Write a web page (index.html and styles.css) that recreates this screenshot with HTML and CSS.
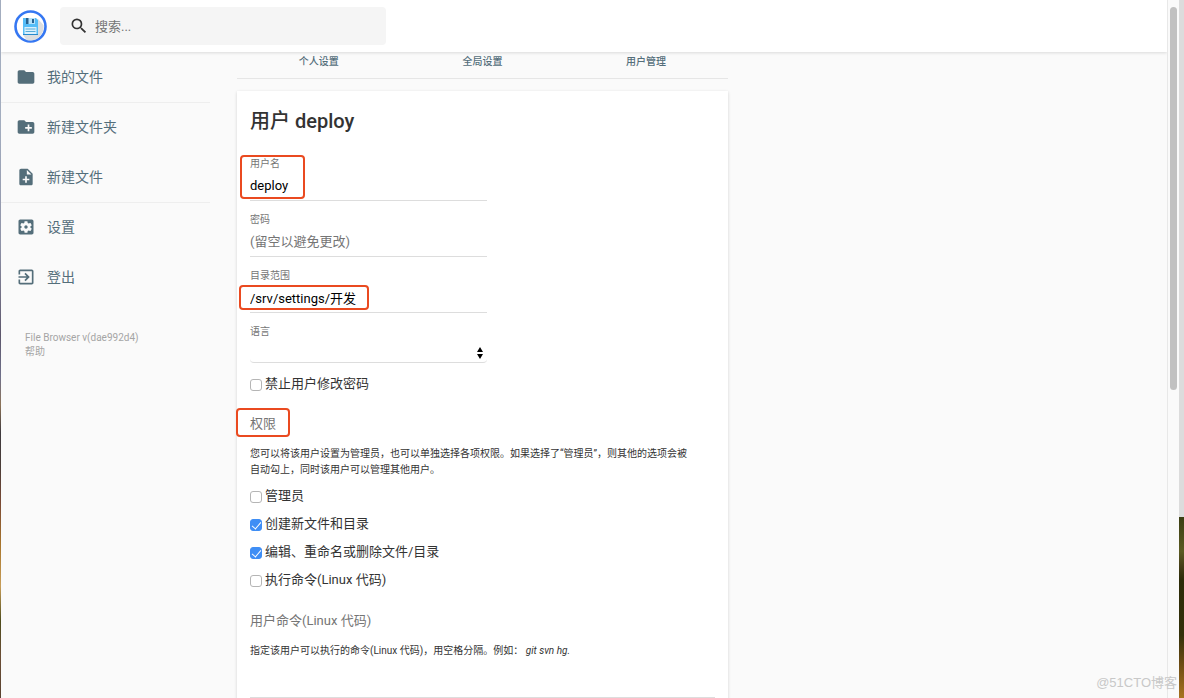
FILE: index.html
```html
<!DOCTYPE html>
<html lang="zh-CN">
<head>
<meta charset="utf-8">
<title>File Browser</title>
<link rel="stylesheet" href="styles.css">
</head>
<body>
<div class="edge-left"></div>
<div class="app">
  <header class="topbar">
    <svg class="logo" viewBox="0 0 33 33" role="img" aria-label="File Browser">
      <circle cx="16.500" cy="16.500" r="15" fill="#fff" stroke="#3577f2" stroke-width="2.600"/>
      <path d="M24 9l5.500 6a13.500 13.500 0 0 1-17 15L9 25z" fill="#dcdee0"/>
      <path d="M9 8h13l2 2v15H9z" fill="#55bdf8"/>
      <path d="M12 8h9v6h-9z" fill="#b5e2fb"/>
      <path d="M12 8h2.500v6H12zM18 9h2v4h-2z" fill="#28618f"/>
      <path d="M10.500 17h12v7h-12z" fill="#d9f0fd"/>
      <path d="M11.500 19h10M11.500 21.500h10" stroke="#58acd8" stroke-width="1"/>
      <path d="M9 24.500h15" stroke="#2889cc" stroke-width="1"/>
    </svg>
    <label class="search">
      <svg class="icon" viewBox="0 0 24 24" aria-hidden="true"><path d="M15.500 14h-.79l-.28-.27A6.471 6.471 0 0 0 16 9.500 6.500 6.500 0 1 0 9.500 16c1.610 0 3.090-.59 4.230-1.570l.27.28v.79l5 4.990L20.490 19l-4.990-5zm-6 0C7.010 14 5 11.990 5 9.500S7.010 5 9.500 5 14 7.010 14 9.500 11.990 14 9.500 14z"/></svg>
      <input type="text" placeholder="搜索..." aria-label="搜索">
    </label>
  </header>
  <div class="body">
    <nav class="sidebar">
      <div class="group">
        <button class="action"><svg class="icon" viewBox="0 0 24 24" aria-hidden="true"><path d="M10 4H4c-1.100 0-1.990.9-1.990 2L2 18c0 1.100.9 2 2 2h16c1.100 0 2-.9 2-2V8c0-1.100-.9-2-2-2h-8l-2-2z"/></svg><span>我的文件</span></button>
      </div>
      <div class="group">
        <button class="action"><svg class="icon" viewBox="0 0 24 24" aria-hidden="true"><path d="M20 6h-8l-2-2H4c-1.110 0-1.990.89-1.990 2L2 18c0 1.110.89 2 2 2h16c1.110 0 2-.89 2-2V8c0-1.110-.89-2-2-2zm-1 8h-3v3h-2v-3h-3v-2h3V9h2v3h3v2z"/></svg><span>新建文件夹</span></button>
        <button class="action"><svg class="icon" viewBox="0 0 24 24" aria-hidden="true"><path d="M14 2H6c-1.100 0-1.990.9-1.990 2L4 20c0 1.100.89 2 1.990 2H18c1.100 0 2-.9 2-2V8l-6-6zm2 14h-3v3h-2v-3H8v-2h3v-3h2v3h3v2zm-3-7V3.500L18.500 9H13z"/></svg><span>新建文件</span></button>
      </div>
      <div class="group">
        <button class="action"><svg class="icon" viewBox="0 0 24 24" aria-hidden="true"><path d="M12 10c-1.100 0-2 .9-2 2s.9 2 2 2 2-.9 2-2-.9-2-2-2zm7-7H5c-1.110 0-2 .9-2 2v14c0 1.100.89 2 2 2h14c1.110 0 2-.9 2-2V5c0-1.100-.89-2-2-2zm-1.750 9c0 .23-.02.46-.05.68l1.480 1.160c.13.110.17.3.08.45l-1.400 2.420c-.09.15-.27.21-.43.15l-1.740-.7c-.36.28-.76.51-1.180.69l-.26 1.850c-.03.17-.18.3-.35.3h-2.800c-.17 0-.32-.13-.35-.29l-.26-1.850c-.43-.18-.82-.41-1.180-.69l-1.740.7c-.16.06-.34 0-.43-.15l-1.400-2.420c-.09-.15-.05-.34.08-.45l1.480-1.160c-.03-.23-.05-.46-.05-.69s.02-.46.05-.68l-1.480-1.160c-.13-.11-.17-.3-.08-.45l1.400-2.420c.09-.15.27-.21.43-.15l1.740.7c.36-.28.76-.51 1.180-.69l.26-1.850c.03-.17.18-.3.35-.3h2.800c.17 0 .32.13.35.29l.26 1.850c.43.18.82.41 1.180.69l1.740-.7c.16-.06.34 0 .43.15l1.400 2.420c.09.15.05.34-.08.45l-1.480 1.160c.03.23.05.46.05.69z"/></svg><span>设置</span></button>
        <button class="action"><svg class="icon" viewBox="0 0 24 24" aria-hidden="true"><path d="M10.090 15.590L11.500 17l5-5-5-5-1.410 1.410L12.670 11H3v2h9.670l-2.580 2.590zM19 3H5c-1.110 0-2 .9-2 2v4h2V5h14v14H5v-4H3v4c0 1.100.89 2 2 2h14c1.100 0 2-.9 2-2V5c0-1.100-.9-2-2-2z"/></svg><span>登出</span></button>
      </div>
      <p class="credits">File Browser v(dae992d4)<br><a href="#help">帮助</a></p>
    </nav>
    <main class="content">
      <nav class="tabs">
        <a href="#profile">个人设置</a>
        <a href="#global">全局设置</a>
        <a href="#users">用户管理</a>
      </nav>
      <form class="card">
        <h2>用户 deploy</h2>
        <div class="field">
          <label for="username">用户名</label>
          <input id="username" type="text" value="deploy">
          <span class="mark mark-name"></span>
        </div>
        <div class="field">
          <label for="password">密码</label>
          <input id="password" type="password" placeholder="(留空以避免更改)">
        </div>
        <div class="field">
          <label for="scope">目录范围</label>
          <input id="scope" type="text" value="/srv/settings/开发">
          <span class="mark mark-scope"></span>
        </div>
        <div class="field">
          <label for="locale">语言</label>
          <div class="picker">
            <select id="locale"><option></option></select>
            <svg class="arrows" viewBox="0 0 6 12" aria-hidden="true"><path d="M3 0l3 5H0zM3 12L0 7h6z"/></svg>
          </div>
        </div>
        <label class="check"><input type="checkbox"><span>禁止用户修改密码</span></label>
        <h3>权限<span class="mark mark-perm"></span></h3>
        <p class="small">您可以将该用户设置为管理员，也可以单独选择各项权限。如果选择了“管理员”，则其他的选项会被<br>自动勾上，同时该用户可以管理其他用户。</p>
        <div class="checks">
          <label class="check"><input type="checkbox"><span>管理员</span></label>
          <label class="check"><input type="checkbox" checked><span>创建新文件和目录</span></label>
          <label class="check"><input type="checkbox" checked><span>编辑、重命名或删除文件/目录</span></label>
          <label class="check"><input type="checkbox"><span>执行命令(Linux 代码)</span></label>
        </div>
        <h3>用户命令(Linux 代码)</h3>
        <p class="small">指定该用户可以执行的命令(Linux 代码)，用空格分隔。例如： <i>git svn hg.</i></p>
        <input class="commands" type="text" aria-label="用户命令">
      </form>
    </main>
  </div>
</div>
<div class="scrollbar"><div class="thumb"></div></div>
<div class="edge-right"></div>
<div class="watermark">@51CTO博客</div>
</body>
</html>
```

FILE: styles.css
```css
* { box-sizing: border-box; }

body {
  margin: 0;
  height: 100vh;
  overflow: hidden;
  position: relative;
  display: flex;
  background: #fafafa;
  color: #333;
  font-family: Roboto, "Noto Sans CJK SC", sans-serif;
  font-size: 13px;
}

button, input, select { font: inherit; }
a { color: inherit; text-decoration: none; }

.edge-left {
  flex: none;
  width: 1px;
  background: linear-gradient(#a3adbf 0 18%, #8f93a8 35%, #5c566b 48%, #6f708a 54%, #8c7358 58%, #3f3a3e 62%, #4b3d38 67%, #7a4a35 72%, #a8752c 78%, #c79d58 84%, #4e4c1c 89%, #6b4e36 94%, #594230);
}

.app {
  flex: 1;
  min-width: 0;
  height: 100%;
  display: flex;
  flex-direction: column;
  overflow: hidden;
}

.icon { flex: none; width: 20px; height: 20px; fill: currentColor; }

.topbar {
  flex: none;
  display: flex;
  align-items: center;
  gap: 13px;
  height: 52px;
  background: #fff;
  box-shadow: 0 1px 3px rgba(0, 0, 0, .13);
  position: relative;
}

.logo { flex: none; width: 33px; height: 33px; margin-left: 13px; }

.search {
  display: flex;
  align-items: center;
  gap: 6px;
  width: 28%;
  height: 38px;
  padding: 0 9px;
  background: #f5f5f5;
  border-radius: 4px;
}

.search input {
  flex: 1;
  min-width: 0;
  padding: 0;
  border: 0;
  outline: 0;
  background: none;
}

.search input::placeholder { color: #757575; }

.body { flex: 1; min-height: 0; display: flex; gap: 27px; }

.sidebar { flex: none; width: 209px; }
.group + .group { box-shadow: inset 0 1px #eee; }

.action {
  display: flex;
  align-items: center;
  gap: 11px;
  width: 100%;
  height: 50px;
  padding: 0 15px;
  border: 0;
  background: none;
  color: #546e7a;
  font-size: 14px;
  text-align: left;
}

.action span { padding-bottom: 2px; }

.credits {
  margin: 29px 0 0;
  padding-left: 24px;
  color: #a5a5a5;
  font-size: 10px;
  line-height: 14px;
}

.content {
  flex: 1;
  display: grid;
  grid-template-columns: 19fr 17fr;
  align-content: start;
  row-gap: 12px;
}

.tabs, .card { grid-column: 1; }

.tabs {
  display: grid;
  grid-template-columns: repeat(3, 1fr);
  height: 27px;
  border-bottom: 1px solid #e6e6e6;
  color: #546e7a;
  font-size: 10px;
  font-weight: 500;
  line-height: 20px;
  text-align: center;
}

.card {
  padding: 18px 13px;
  background: #fff;
  box-shadow: 0 1px 3px rgba(0, 0, 0, .16);
}

h2 {
  margin: 0 0 24px;
  font-size: 20px;
  font-weight: 500;
  line-height: 24px;
}

.field {
  position: relative;
  width: 51%;
  margin-bottom: 12px;
}

.field label {
  display: block;
  color: #757575;
  font-size: 10px;
  line-height: 14px;
}

.field input, .commands {
  display: block;
  width: 100%;
  height: 30px;
  padding: 0;
  border: 0;
  border-bottom: 1px solid #ddd;
  outline: 0;
  background: none;
  color: #000;
}

.field input::placeholder { color: #757575; }

.picker { position: relative; }

.picker select {
  display: block;
  appearance: none;
  width: 100%;
  height: 24px;
  border: 0;
  border-bottom: 1px solid #ddd;
  border-radius: 4px;
  background: none;
}

.arrows {
  position: absolute;
  right: 4px;
  top: 8px;
  width: 6px;
  height: 12px;
  pointer-events: none;
}

.check {
  display: flex;
  align-items: center;
  gap: 3px;
  line-height: 20px;
}

.field + .check { margin-top: -1px; }

.check input {
  appearance: none;
  position: relative;
  flex: none;
  width: 12px;
  height: 12px;
  margin: 2px 0 0;
  border: 1px solid #b5b5b5;
  border-radius: 3px;
  background: #fff;
}

.check input:checked { background: #3f8ef5; border-color: #3f8ef5; }

.check input:checked::after {
  content: "";
  position: absolute;
  left: 3px;
  top: 0;
  width: 4px;
  height: 8px;
  border: solid #fff;
  border-width: 0 1px 1px 0;
  transform: rotate(40deg);
}

.checks { display: grid; gap: 8px; margin: 8px 0 21px; }

h3 {
  position: relative;
  margin: 20px 0 12px;
  color: #757575;
  font-size: 13px;
  font-weight: 400;
  line-height: 20px;
}

.small { margin: 0; font-size: 10px; line-height: 16px; }

.commands { height: 39px; }

.mark {
  position: absolute;
  border: 2px solid #ea4a20;
  border-radius: 4px;
  pointer-events: none;
}

.mark-name { left: -10px; top: -2px; width: 65px; height: 44px; }
.mark-scope { left: -11px; top: 16px; width: 130px; height: 25px; }
.mark-perm { left: -14px; top: -6px; width: 54px; height: 29px; }

.scrollbar {
  flex: none;
  width: 12px;
  padding: 7px 2px;
  background: #fafafa;
  border-left: 1px solid #e8e8e8;
}

.thumb { width: 7px; height: 56%; border-radius: 4px; background: #c1c1c1; }

.edge-right {
  flex: none;
  width: 5px;
  background: linear-gradient(#dcdcdc 0 74%, #3a3d12 74%, #5b5a22 79%, #463f18 81%, #2c2b08 83%, #33300a 91%, #6a4a12 95%, #a87320);
}

.watermark {
  position: absolute;
  right: 7px;
  bottom: 5px;
  color: #c8c8c8;
  font-family: "Liberation Sans", "Noto Sans CJK SC", sans-serif;
  font-size: 13px;
  line-height: 20px;
}
```
